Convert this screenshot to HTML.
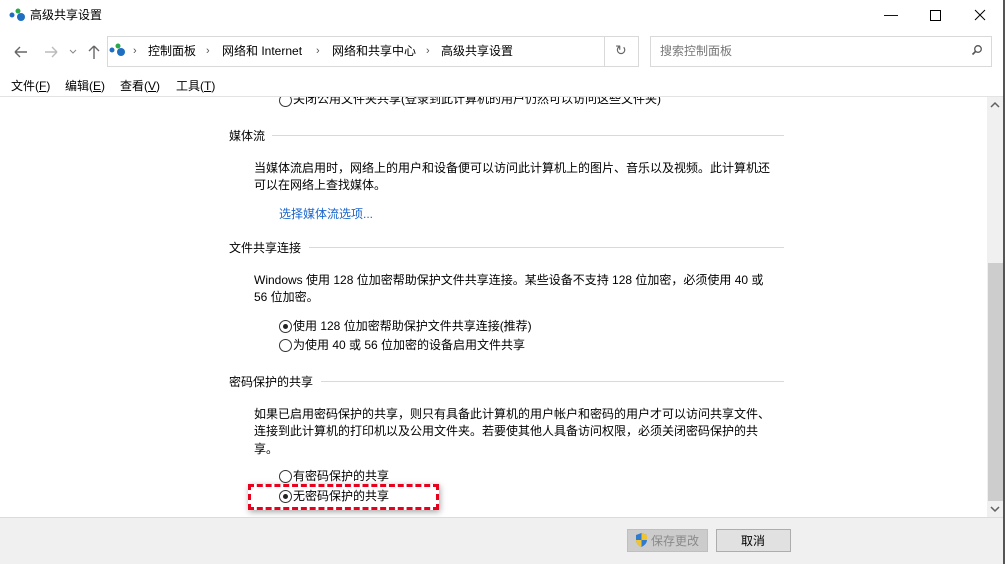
<!DOCTYPE html>
<html><head><meta charset="utf-8"><style>
*{margin:0;padding:0;box-sizing:border-box}
body{width:1005px;height:564px;background:#fff;font-family:"Liberation Sans","Noto Sans CJK SC",sans-serif;font-size:12px;color:#000;position:relative;overflow:hidden}
.a{position:absolute;white-space:nowrap;line-height:16px}
.rad{position:absolute;width:13px;height:13px;border:1px solid #333;border-radius:50%;background:#fff}
.rad.on::after{content:"";position:absolute;left:3px;top:3px;width:5px;height:5px;border-radius:50%;background:#222}
.hl{position:absolute;height:1px;background:#d9d9d9}
</style></head><body>
<!-- window border -->
<div style="position:absolute;right:0;top:0;width:2px;height:564px;background:#555"></div>
<!-- title -->
<svg style="position:absolute;left:9px;top:7px" width="18" height="16"><circle cx="3" cy="8" r="2.5" fill="#1e6fc2"/><circle cx="9" cy="4" r="2.5" fill="#2aa84a"/><circle cx="12" cy="10" r="4" fill="#1e6fc2"/></svg>
<div class="a" style="left:30px;top:7px">高级共享设置</div>
<div class="a" style="left:884px;top:6px;font-size:14px">&#8212;</div>
<div style="position:absolute;left:930px;top:10px;width:11px;height:11px;border:1px solid #000"></div>
<svg style="position:absolute;left:974px;top:9px" width="12" height="12"><path d="M1 1L11 11M11 1L1 11" stroke="#000" stroke-width="1"/></svg>
<!-- nav -->
<svg style="position:absolute;left:12px;top:44px" width="100" height="16"><path d="M3 8H15M3 8L8 3M3 8L8 13" stroke="#666" stroke-width="1.4" fill="none"/><path d="M33 8H45M45 8L40 3M45 8L40 13" stroke="#bbb" stroke-width="1.4" fill="none"/><path d="M58 6L61 9L64 6" stroke="#888" fill="none"/><path d="M82 2V15M82 2L77 7M82 2L87 7" stroke="#666" stroke-width="1.4" fill="none"/></svg>
<div style="position:absolute;left:107px;top:36px;width:532px;height:31px;border:1px solid #d9d9d9"></div>
<div style="position:absolute;left:604px;top:36px;width:1px;height:31px;background:#d9d9d9"></div>
<svg style="position:absolute;left:109px;top:42px" width="18" height="16"><circle cx="3" cy="8" r="2.5" fill="#1e6fc2"/><circle cx="9" cy="4" r="2.5" fill="#2aa84a"/><circle cx="12" cy="10" r="4" fill="#1e6fc2"/></svg>
<div class="a" style="left:133px;top:43px;color:#555;font-size:11px">›</div>
<div class="a" style="left:148px;top:43px">控制面板</div>
<div class="a" style="left:206px;top:43px;color:#555;font-size:11px">›</div>
<div class="a" style="left:222px;top:43px">网络和 Internet</div>
<div class="a" style="left:316px;top:43px;color:#555;font-size:11px">›</div>
<div class="a" style="left:332px;top:43px">网络和共享中心</div>
<div class="a" style="left:426px;top:43px;color:#555;font-size:11px">›</div>
<div class="a" style="left:441px;top:43px">高级共享设置</div>
<div class="a" style="left:615px;top:42px;color:#666;font-size:14px">↻</div>
<div style="position:absolute;left:650px;top:36px;width:342px;height:31px;border:1px solid #d9d9d9"></div>
<div class="a" style="left:660px;top:43px;color:#777">搜索控制面板</div>
<svg style="position:absolute;left:971px;top:44px" width="12" height="12"><circle cx="7" cy="5" r="3.3" stroke="#555" stroke-width="1.3" fill="none"/><path d="M5 7L1.5 10.5" stroke="#555" stroke-width="1.6"/></svg>
<!-- menu -->
<div class="a" style="left:11px;top:78px">文件(<u>F</u>)</div>
<div class="a" style="left:65px;top:78px">编辑(<u>E</u>)</div>
<div class="a" style="left:120px;top:78px">查看(<u>V</u>)</div>
<div class="a" style="left:176px;top:78px">工具(<u>T</u>)</div>
<div class="hl" style="left:0;top:96px;width:1003px;background:#e3e3e3"></div>
<!-- content -->
<div style="position:absolute;left:0;top:97px;width:987px;height:420px;overflow:hidden">
<div class="rad" style="left:279px;top:-3px"></div>
<div class="a" style="left:293px;top:-6px">关闭公用文件夹共享(登录到此计算机的用户仍然可以访问这些文件夹)</div>
<div class="a" style="left:229px;top:31px">媒体流</div>
<div class="hl" style="left:272px;top:38px;width:512px"></div>
<div class="a" style="left:254px;top:63px">当媒体流启用时，网络上的用户和设备便可以访问此计算机上的图片、音乐以及视频。此计算机还</div>
<div class="a" style="left:254px;top:80px">可以在网络上查找媒体。</div>
<div class="a" style="left:279px;top:109px;color:#1a66cc">选择媒体流选项...</div>
<div class="a" style="left:229px;top:143px">文件共享连接</div>
<div class="hl" style="left:309px;top:150px;width:475px"></div>
<div class="a" style="left:254px;top:175px">Windows 使用 128 位加密帮助保护文件共享连接。某些设备不支持 128 位加密，必须使用 40 或</div>
<div class="a" style="left:254px;top:192px">56 位加密。</div>
<div class="rad on" style="left:279px;top:223px"></div>
<div class="a" style="left:293px;top:221px">使用 128 位加密帮助保护文件共享连接(推荐)</div>
<div class="rad" style="left:279px;top:242px"></div>
<div class="a" style="left:293px;top:240px">为使用 40 或 56 位加密的设备启用文件共享</div>
<div class="a" style="left:229px;top:277px">密码保护的共享</div>
<div class="hl" style="left:321px;top:284px;width:463px"></div>
<div class="a" style="left:254px;top:309px">如果已启用密码保护的共享，则只有具备此计算机的用户帐户和密码的用户才可以访问共享文件、</div>
<div class="a" style="left:254px;top:326px">连接到此计算机的打印机以及公用文件夹。若要使其他人具备访问权限，必须关闭密码保护的共</div>
<div class="a" style="left:254px;top:344px">享。</div>
<div class="rad" style="left:279px;top:373px"></div>
<div class="a" style="left:293px;top:371px">有密码保护的共享</div>
<div style="position:absolute;left:248px;top:387px;width:191px;height:26px;border:3px dashed #e8001c;box-shadow:1px 2px 6px rgba(0,0,0,.35)"></div>
<div class="rad on" style="left:279px;top:393px"></div>
<div class="a" style="left:293px;top:391px">无密码保护的共享</div>
</div>
<!-- scrollbar -->
<div style="position:absolute;left:987px;top:97px;width:16px;height:420px;background:#f0f0f0"></div>
<div style="position:absolute;left:988px;top:263px;width:15px;height:238px;background:#cdcdcd"></div>
<svg style="position:absolute;left:990px;top:101px" width="10" height="8"><path d="M1 6L5 2L9 6" stroke="#606060" stroke-width="1.5" fill="none"/></svg>
<svg style="position:absolute;left:990px;top:505px" width="10" height="8"><path d="M1 2L5 6L9 2" stroke="#606060" stroke-width="1.5" fill="none"/></svg>
<!-- footer -->
<div style="position:absolute;left:0;top:517px;width:1003px;height:47px;background:#f0f0f0;border-top:1px solid #dcdcdc"></div>
<div style="position:absolute;left:627px;top:529px;width:81px;height:23px;background:#ccc;border:1px solid #bfbfbf"></div>
<svg style="position:absolute;left:635px;top:532px" width="13" height="16"><path d="M6.5 1L12 3V8C12 11 9.5 13.5 6.5 15C3.5 13.5 1 11 1 8V3Z" fill="#2f7bd0"/><path d="M6.5 1V8H12V3ZM1 8H6.5V15C3.5 13.5 1 11 1 8Z" fill="#f3c431"/></svg>
<div class="a" style="left:651px;top:533px;color:#8a8a8a">保存更改</div>
<div style="position:absolute;left:716px;top:529px;width:75px;height:23px;background:#e1e1e1;border:1px solid #adadad"></div>
<div class="a" style="left:741px;top:533px">取消</div>
</body></html>
